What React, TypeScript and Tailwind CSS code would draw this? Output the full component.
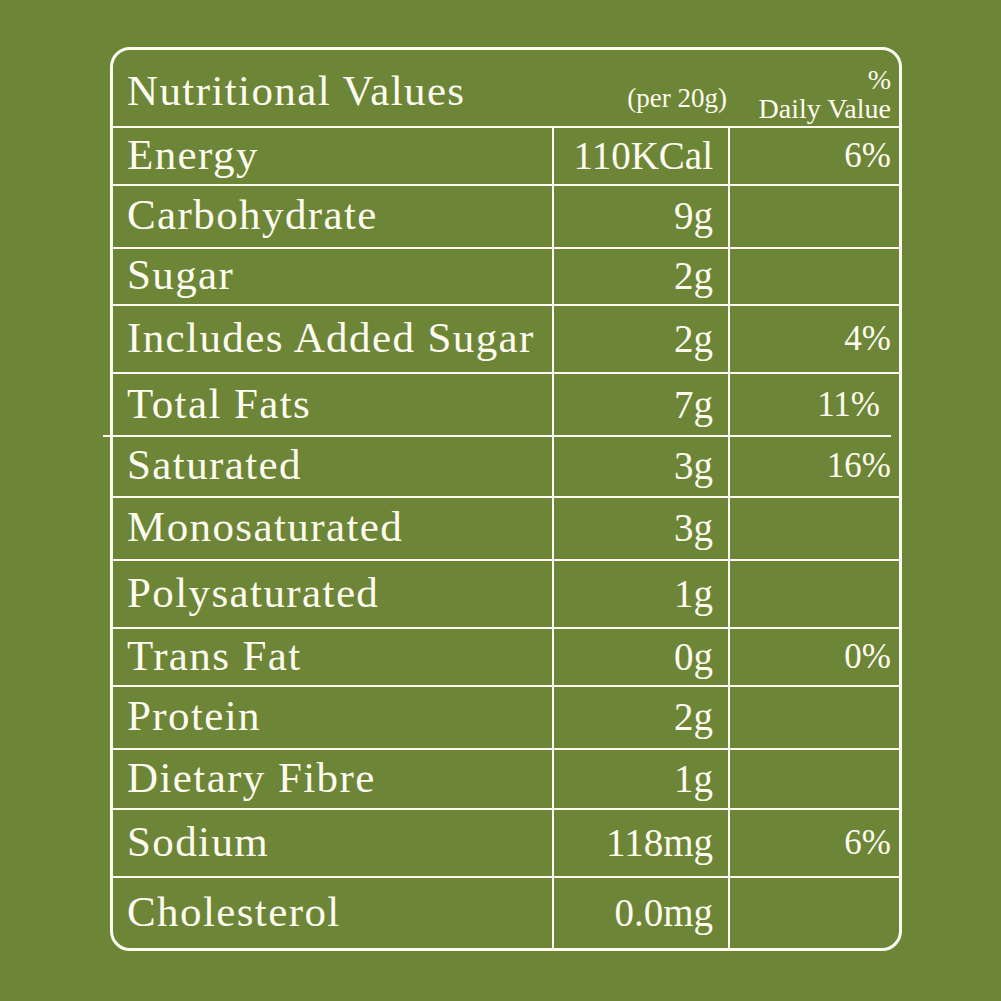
import React from "react";

type Row = {
  name: string;
  amount: string;
  dv?: string;
  h: string;
  dvClass?: string;
  fatsLine?: boolean;
};

const ROWS: Row[] = [
  { name: "Energy", amount: "110KCal", dv: "6%", h: "h-[58px]" },
  { name: "Carbohydrate", amount: "9g", h: "h-[63px]" },
  { name: "Sugar", amount: "2g", h: "h-[57px]" },
  { name: "Includes Added Sugar", amount: "2g", dv: "4%", h: "h-[68px]" },
  { name: "Total Fats", amount: "7g", dv: "11%", h: "h-[63px]", dvClass: "pr-[19px]", fatsLine: true },
  { name: "Saturated", amount: "3g", dv: "16%", h: "h-[61px]" },
  { name: "Monosaturated", amount: "3g", h: "h-[63px]" },
  { name: "Polysaturated", amount: "1g", h: "h-[68px]" },
  { name: "Trans Fat", amount: "0g", dv: "0%", h: "h-[58px]" },
  { name: "Protein", amount: "2g", h: "h-[63px]" },
  { name: "Dietary Fibre", amount: "1g", h: "h-[60px]" },
  { name: "Sodium", amount: "118mg", dv: "6%", h: "h-[68px]" },
  { name: "Cholesterol", amount: "0.0mg", h: "h-[70px]" },
];

export default function App() {
  return (
    <div className="w-[1001px] h-[1001px] bg-[#6d8537] pt-[47px] pl-[110px] font-['Liberation_Serif',serif] text-[#fdfbef]">
      <div className="w-[792px] border-[3px] border-[#fdfbef] rounded-[20px] flex flex-col">
        {/* header */}
        <div className="h-[78px] border-b-2 border-[#fdfbef] flex">
          <div className="w-[441px] pl-[14px] pt-[19px] text-[43px] tracking-[1.4px] leading-none">Nutritional Values</div>
          <div className="w-[176px] flex items-end justify-end pr-[3px] pb-[14px] text-[27px] leading-none">(per 20g)</div>
          <div className="flex-1 flex flex-col items-end justify-end pr-[8px] pb-[3px] text-[28px] leading-[29px]">
            <span>%</span>
            <span>Daily Value</span>
          </div>
        </div>

        {ROWS.map((row, i) => (
          <div
            key={row.name}
            className={`relative flex ${row.h} ${i < ROWS.length - 1 && !row.fatsLine ? "border-b-2 border-[#fdfbef]" : ""}`}
          >
            <div className="w-[441px] border-r-2 border-[#fdfbef] flex items-center pl-[14px] pb-[4px] text-[43px] tracking-[1.4px] leading-none">
              {row.name}
            </div>
            <div className="w-[176px] border-r-2 border-[#fdfbef] flex items-center justify-end pr-[15px] pb-[2px] text-[39px] leading-none">
              {row.amount}
            </div>
            <div className={`flex-1 flex items-center justify-end ${row.dvClass ?? "pr-[8px]"} pb-[2px] text-[35px] leading-none`}>
              {row.dv}
            </div>
            {row.fatsLine && (
              <span className="absolute left-[-10px] right-[8px] bottom-0 h-[2px] bg-[#fdfbef]" />
            )}
          </div>
        ))}
      </div>
    </div>
  );
}
